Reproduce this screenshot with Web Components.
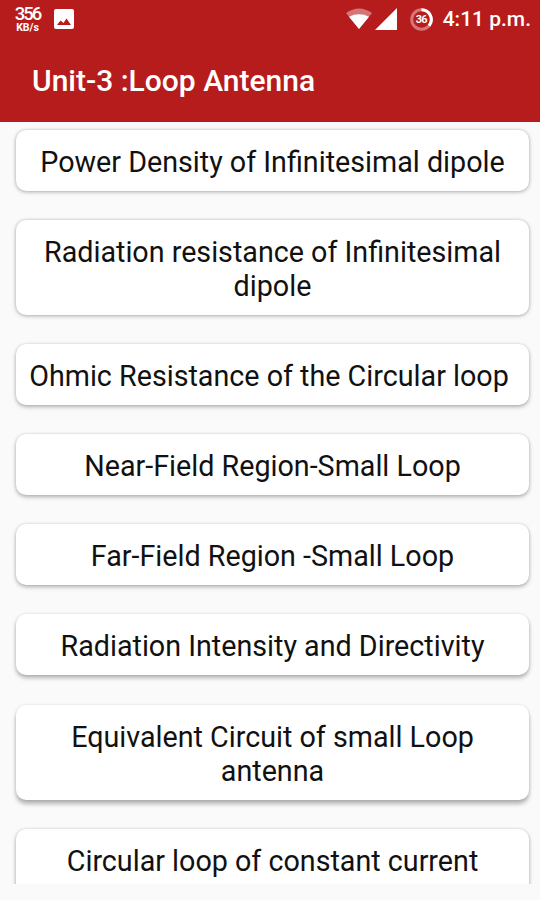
<!DOCTYPE html>
<html lang="en">
<head>
<meta charset="utf-8">
<title>Loop Antenna</title>
<style>
    html, body { margin: 0; height: 100%; background: #fafafa; font-family: Roboto, sans-serif; }
    body { overflow: hidden; }
</style>
</head>
<body>
<unit-screen>
    <status-bar slot="top"></status-bar>
    <app-bar slot="top">Unit-3 :Loop Antenna</app-bar>
    <topic-card style="--drop: 1px">Power Density of Infinitesimal dipole</topic-card>
    <topic-card style="--drop: 1px">Radiation resistance of Infinitesimal<br>dipole</topic-card>
    <topic-card style="--shift: -7px">Ohmic Resistance of the Circular loop</topic-card>
    <topic-card>Near-Field Region-Small Loop</topic-card>
    <topic-card>Far-Field Region -Small Loop</topic-card>
    <topic-card style="--drop: 3px">Radiation Intensity and Directivity</topic-card>
    <topic-card style="--drop: 4px">Equivalent Circuit of small Loop<br>antenna</topic-card>
    <topic-card style="--bottom: 20px">Circular loop of constant current</topic-card>
</unit-screen>
<script>
class UnitScreen extends HTMLElement {
    constructor() {
        super();
        this.attachShadow({ mode: 'open' });
    }
    connectedCallback() {
        this.shadowRoot.innerHTML = `
            <style>
                :host { display: flex; flex-direction: column; width: 540px; height: 900px; background: #fafafa; }
                header { background: #b71c1c; height: 122px; flex: none; }
                main { display: flex; flex-direction: column; gap: 29.1px; height: 762px; padding: 8px 11px 0 16px; box-sizing: border-box; overflow: hidden; }
            </style>
            <header><slot name="top"></slot></header>
            <main><slot></slot></main>
        `;
    }
}
customElements.define('unit-screen', UnitScreen);

// Phone status bar with network speed, signal and clock
class StatusBar extends HTMLElement {
    constructor() {
        super();
        this.attachShadow({ mode: 'open' });
    }
    connectedCallback() {
        this.shadowRoot.innerHTML = `
            <style>
                :host { display: flex; align-items: center; height: 38px; padding: 0 9px 0 14px; color: #fff; }
                .speed { display: flex; flex-direction: column; align-items: center; width: 27px; padding-top: 1px; font-weight: 700; white-space: nowrap; }
                .rate { font-size: 18.500px; line-height: 17px; letter-spacing: -2px; font-weight: 500; }
                .unit { font-size: 10.500px; line-height: 10px; }
                svg { display: block; fill: #fff; }
                .photo { margin-left: 13px; }
                .right { margin-left: auto; display: flex; align-items: center; }
                .signal { margin-left: 3px; }
                .battery { margin-left: 13px; }
                .time { margin-left: 10px; font-size: 21px; font-weight: 500; white-space: nowrap; }
            </style>
            <div class="speed"><span class="rate">356</span><span class="unit">KB/s</span></div>
            <svg class="photo" width="20" height="20" viewBox="0 0 20 20"><path fill-rule="evenodd" d="M2 0h16a2 2 0 0 1 2 2v16a2 2 0 0 1-2 2H2a2 2 0 0 1-2-2V2a2 2 0 0 1 2-2zM3 16h14l-4.500-6.500L9.500 14 6.500 11.500z"/></svg>
            <div class="right">
                <svg width="26" height="22" viewBox="0 0 26 22"><path fill-opacity=".4" d="M0 5Q13-4 26 5L13 21z"/><path d="M3 8.700Q13 4 23 8.700L13 21z"/></svg>
                <svg class="signal" width="22" height="22" viewBox="0 0 22 22"><path d="M22 0v22H0z"/></svg>
                <svg class="battery" width="23" height="23" viewBox="0 0 23 23"><circle cx="11.500" cy="11.500" r="9.800" fill="none" stroke="#fff" stroke-opacity=".4" stroke-width="3"/><path fill="none" stroke="#fff" stroke-width="3" d="M11.500 1.700A9.800 9.800 0 0 1 19 17.800"/><text x="11.200" y="15.300" text-anchor="middle" font-size="11" font-weight="700" letter-spacing="-0.800">36</text></svg>
                <div class="time">4:11 p.m.</div>
            </div>
        `;
    }
}
customElements.define('status-bar', StatusBar);

class AppBar extends HTMLElement {
    constructor() {
        super();
        this.attachShadow({ mode: 'open' });
    }
    connectedCallback() {
        this.shadowRoot.innerHTML = `
            <style>
                :host { display: flex; align-items: center; height: 84px; padding-left: 32px; color: #fff; font-size: 30px; font-weight: 500; }
                span { white-space: nowrap; }
            </style>
            <span><slot></slot></span>
        `;
    }
}
customElements.define('app-bar', AppBar);

class TopicCard extends HTMLElement {
    constructor() {
        super();
        this.attachShadow({ mode: 'open' });
    }
    connectedCallback() {
        this.shadowRoot.innerHTML = `
            <style>
                :host { display: block; flex: none; background: #fff; border-radius: 10px; padding: 15px 0 var(--bottom, 12px); box-shadow: 0 var(--drop, 2px) 4px rgba(0,0,0,0.28), 0 0 3px rgba(0,0,0,0.12); text-align: center; color: #111; font-size: 28.700px; line-height: 34px; white-space: nowrap; }
                div { margin-left: var(--shift, 0); }
            </style>
            <div><slot></slot></div>
        `;
    }
}
customElements.define('topic-card', TopicCard);
</script>
</body>
</html>
